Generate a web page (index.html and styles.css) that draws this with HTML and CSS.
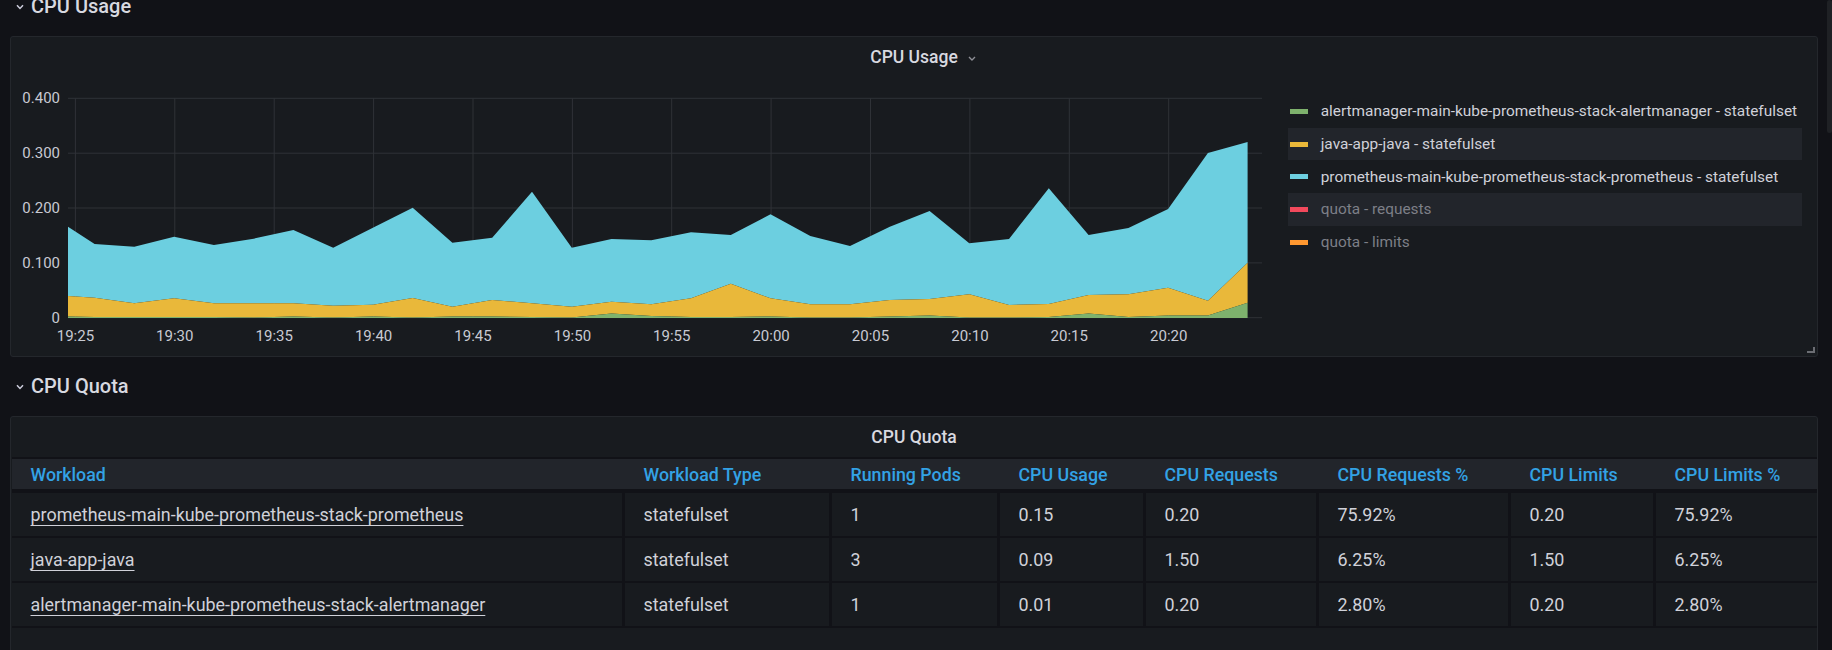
FILE: index.html
```html
<!DOCTYPE html>
<html lang="en">
<head>
<meta charset="utf-8">
<title>CPU Usage</title>
<link rel="stylesheet" href="styles.css">
</head>
<body>
<div class="dashboard">
  <div class="row-header">
    <svg class="row-chev" viewBox="0 0 8 6" width="8" height="6"><path d="M1 1.2 L4 4.4 L7 1.2" /></svg>
    <span class="row-title">CPU Usage</span>
  </div>

  <section class="panel panel-graph">
    <header class="panel-header">
      <span class="panel-title">CPU Usage</span>
      <svg class="title-chev" viewBox="0 0 8 5" width="8" height="5"><path d="M1 1 L4 4 L7 1" /></svg>
    </header>
    <div class="graph-body">
      <svg class="graph" viewBox="11 76 1267 280" width="1267" height="280">
        <g class="grid">
          <line x1="68" y1="98.3" x2="1262" y2="98.3"/>
          <line x1="68" y1="153.2" x2="1262" y2="153.2"/>
          <line x1="68" y1="208" x2="1262" y2="208"/>
          <line x1="68" y1="262.9" x2="1262" y2="262.9"/>
          <line x1="68" y1="317.7" x2="1262" y2="317.7"/>
          <line x1="75.4" y1="98.3" x2="75.4" y2="317.7"/>
          <line x1="174.8" y1="98.3" x2="174.8" y2="317.7"/>
          <line x1="274.2" y1="98.3" x2="274.2" y2="317.7"/>
          <line x1="373.6" y1="98.3" x2="373.6" y2="317.7"/>
          <line x1="473" y1="98.3" x2="473" y2="317.7"/>
          <line x1="572.4" y1="98.3" x2="572.4" y2="317.7"/>
          <line x1="671.7" y1="98.3" x2="671.7" y2="317.7"/>
          <line x1="771.1" y1="98.3" x2="771.1" y2="317.7"/>
          <line x1="870.5" y1="98.3" x2="870.5" y2="317.7"/>
          <line x1="969.9" y1="98.3" x2="969.9" y2="317.7"/>
          <line x1="1069.3" y1="98.3" x2="1069.3" y2="317.7"/>
          <line x1="1168.7" y1="98.3" x2="1168.7" y2="317.7"/>
        </g>
        <polygon class="area-prom" points="68,226.7 94.6,244 134.3,246.7 174.1,236.7 213.9,245 253.6,238.7 293.4,230 333.2,247.7 372.9,227.7 412.7,207.7 452.4,242.7 492.2,237.7 532,191.7 571.8,247.7 611.5,239 651.3,240.3 691,232.3 730.8,235 770.5,214.3 810.3,236 850,246 889.8,226.7 929.6,211 969.3,243.3 1009,239 1048.8,188.3 1088.6,235 1128.4,228 1168.1,209 1207.9,153 1247.6,142 1247.6,262.7 1207.9,300.7 1168.1,287.7 1128.4,294.3 1088.6,295 1048.8,304 1009,305 969.3,294.3 929.6,299 889.8,300 850,304.3 810.3,304.3 770.5,298.3 730.8,283.7 691,298.3 651.3,304.3 611.5,301.7 571.8,306.7 532,303.3 492.2,300 452.4,306.7 412.7,298 372.9,304.7 333.2,305.7 293.4,303.3 253.6,303.3 213.9,303.3 174.1,298.3 134.3,303.3 94.6,297.7 68,296"/>
        <polygon class="area-java" points="68,296 94.6,297.7 134.3,303.3 174.1,298.3 213.9,303.3 253.6,303.3 293.4,303.3 333.2,305.7 372.9,304.7 412.7,298 452.4,306.7 492.2,300 532,303.3 571.8,306.7 611.5,301.7 651.3,304.3 691,298.3 730.8,283.7 770.5,298.3 810.3,304.3 850,304.3 889.8,300 929.6,299 969.3,294.3 1009,305 1048.8,304 1088.6,295 1128.4,294.3 1168.1,287.7 1207.9,300.7 1247.6,262.7 1247.6,302.7 1207.9,315.5 1168.1,315.5 1128.4,317 1088.6,313.5 1048.8,317 1009,317.5 969.3,317.5 929.6,315.5 889.8,316.5 850,317.5 810.3,317.5 770.5,316.5 730.8,317 691,317 651.3,316 611.5,313.5 571.8,317.5 532,317 492.2,316.5 452.4,316.5 412.7,317.5 372.9,316.5 333.2,317.5 293.4,316.5 253.6,317.5 213.9,317 174.1,317 134.3,317 94.6,317 68,316.5"/>
        <polygon class="area-alert" points="68,316.5 94.6,317 134.3,317 174.1,317 213.9,317 253.6,317.5 293.4,316.5 333.2,317.5 372.9,316.5 412.7,317.5 452.4,316.5 492.2,316.5 532,317 571.8,317.5 611.5,313.5 651.3,316 691,317 730.8,317 770.5,316.5 810.3,317.5 850,317.5 889.8,316.5 929.6,315.5 969.3,317.5 1009,317.5 1048.8,317 1088.6,313.5 1128.4,317 1168.1,315.5 1207.9,315.5 1247.6,302.7 1247.6,318 68,318"/>
        <g class="axis y-axis">
          <text x="60" y="98.3">0.400</text>
          <text x="60" y="153.2">0.300</text>
          <text x="60" y="208">0.200</text>
          <text x="60" y="262.9">0.100</text>
          <text x="60" y="317.7">0</text>
        </g>
        <g class="axis x-axis">
          <text x="75.4" y="335.7">19:25</text>
          <text x="174.8" y="335.7">19:30</text>
          <text x="274.2" y="335.7">19:35</text>
          <text x="373.6" y="335.7">19:40</text>
          <text x="473" y="335.7">19:45</text>
          <text x="572.4" y="335.7">19:50</text>
          <text x="671.7" y="335.7">19:55</text>
          <text x="771.1" y="335.7">20:00</text>
          <text x="870.5" y="335.7">20:05</text>
          <text x="969.9" y="335.7">20:10</text>
          <text x="1069.3" y="335.7">20:15</text>
          <text x="1168.7" y="335.7">20:20</text>
        </g>
      </svg>
      <ul class="legend">
        <li class="legend-item"><span class="swatch sw-green"></span><span class="legend-label">alertmanager-main-kube-prometheus-stack-alertmanager - statefulset</span></li>
        <li class="legend-item alt"><span class="swatch sw-yellow"></span><span class="legend-label">java-app-java - statefulset</span></li>
        <li class="legend-item"><span class="swatch sw-blue"></span><span class="legend-label">prometheus-main-kube-prometheus-stack-prometheus - statefulset</span></li>
        <li class="legend-item alt hidden"><span class="swatch sw-red"></span><span class="legend-label">quota - requests</span></li>
        <li class="legend-item hidden"><span class="swatch sw-orange"></span><span class="legend-label">quota - limits</span></li>
      </ul>
    </div>
    <span class="resize-handle"></span>
  </section>

  <div class="row-header">
    <svg class="row-chev" viewBox="0 0 8 6" width="8" height="6"><path d="M1 1.2 L4 4.4 L7 1.2" /></svg>
    <span class="row-title">CPU Quota</span>
  </div>

  <section class="panel panel-table">
    <header class="panel-header">
      <span class="panel-title">CPU Quota</span>
    </header>
    <div class="table">
      <div class="tr thead">
        <div class="th">Workload</div>
        <div class="th">Workload Type</div>
        <div class="th">Running Pods</div>
        <div class="th">CPU Usage</div>
        <div class="th">CPU Requests</div>
        <div class="th">CPU Requests %</div>
        <div class="th">CPU Limits</div>
        <div class="th">CPU Limits %</div>
      </div>
      <div class="tr tbody-row">
        <div class="td"><a class="link">prometheus-main-kube-prometheus-stack-prometheus</a></div>
        <div class="td">statefulset</div>
        <div class="td">1</div>
        <div class="td">0.15</div>
        <div class="td">0.20</div>
        <div class="td">75.92%</div>
        <div class="td">0.20</div>
        <div class="td">75.92%</div>
      </div>
      <div class="tr tbody-row">
        <div class="td"><a class="link">java-app-java</a></div>
        <div class="td">statefulset</div>
        <div class="td">3</div>
        <div class="td">0.09</div>
        <div class="td">1.50</div>
        <div class="td">6.25%</div>
        <div class="td">1.50</div>
        <div class="td">6.25%</div>
      </div>
      <div class="tr tbody-row">
        <div class="td"><a class="link">alertmanager-main-kube-prometheus-stack-alertmanager</a></div>
        <div class="td">statefulset</div>
        <div class="td">1</div>
        <div class="td">0.01</div>
        <div class="td">0.20</div>
        <div class="td">2.80%</div>
        <div class="td">0.20</div>
        <div class="td">2.80%</div>
      </div>
    </div>
  </section>
</div>
<div class="scroll-thumb"></div>
</body>
</html>
```
FILE: styles.css
```css
html, body {
  margin: 0;
  padding: 0;
  background: #111217;
  height: 650px;
  overflow: hidden;
}

body {
  font-family: Roboto, "Noto Sans", "Liberation Sans", sans-serif;
  color: #ccccdc;
}

.dashboard {
  margin-top: -6px;
  padding: 0 14px 0 10px;
}

.row-header {
  display: flex;
  align-items: center;
  height: 24px;
  margin-bottom: 18px;
  padding-left: 6px;
}

.row-chev {
  width: 8px;
  height: 6px;
  margin-right: 7px;
  margin-top: 2px;
  fill: none;
  stroke: #ccccdc;
  stroke-width: 1.5;
}

.row-title {
  font-size: 20px;
  font-weight: 500;
  line-height: 24px;
  color: #d8d9e0;
}

.panel {
  position: relative;
  box-sizing: border-box;
  background: #181b1f;
  border: 1px solid #24272c;
  border-radius: 3px;
}

.panel-graph {
  height: 321px;
  margin-bottom: 17px;
}

.panel-table {
  height: 270px;
}

.panel-header {
  height: 39px;
  display: flex;
  align-items: center;
  justify-content: center;
}

.panel-table .panel-header {
  height: 40px;
}

.panel-title {
  font-size: 17.5px;
  font-weight: 500;
  color: #d8d9e0;
  line-height: 20px;
}

.title-chev {
  width: 8px;
  height: 5px;
  margin-left: 10px;
  margin-right: -18px;
  margin-top: 3px;
  fill: none;
  stroke: #8e8f96;
  stroke-width: 1.4;
}

.graph-body {
  display: flex;
  height: 280px;
}

.graph {
  display: block;
  flex: none;
}

.grid line {
  stroke: #2f3237;
  stroke-width: 1;
}

.area-prom { fill: #6ccfe0; }
.area-java { fill: #e9b83a; }
.area-alert { fill: #7eb26d; }

.axis text {
  font-family: Roboto, "Noto Sans", sans-serif;
  font-size: 15px;
  fill: #c8cad3;
  dominant-baseline: central;
}

.y-axis text { text-anchor: end; }
.x-axis text { text-anchor: middle; }

.legend {
  list-style: none;
  margin: 0 0 0 10px;
  padding: 19px 0 0 0;
  width: 514px;
}

.legend-item {
  display: flex;
  align-items: center;
  height: 32.7px;
  padding-left: 2px;
  font-size: 15.4px;
  color: #d0d1d9;
}

.legend-item.alt {
  background: #22252b;
}

.legend-item.hidden {
  color: #7d7f87;
}

.swatch {
  width: 18px;
  height: 5px;
  margin-right: 12.7px;
  flex: none;
}

.sw-green { background: #7eb26d; }
.sw-yellow { background: #eab839; }
.sw-blue { background: #6ed0e0; }
.sw-red { background: #f2495c; }
.sw-orange { background: #ff9830; }

.resize-handle {
  position: absolute;
  right: 2px;
  bottom: 3px;
  width: 6px;
  height: 4px;
  border-right: 2px solid #6b6d73;
  border-bottom: 2px solid #6b6d73;
}

.table {
  margin-left: 1px;
  border-top: 2px solid #111217;
}

.tr {
  display: grid;
  grid-template-columns: 613px 207px 168px 146px 173px 192px 145px 1fr;
}

.thead {
  height: 30px;
  background: #22252b;
  border-bottom: 4px solid #111217;
}

.th {
  display: flex;
  align-items: center;
  padding-left: 18.5px;
  font-size: 17.8px;
  font-weight: 500;
  color: #33a2e5;
  white-space: nowrap;
}

.tbody-row {
  height: 43px;
  border-bottom: 2px solid #111217;
}

.td {
  display: flex;
  align-items: center;
  box-sizing: border-box;
  padding-left: 18.5px;
  font-size: 17.9px;
  color: #d0d1d9;
  border-right: 3px solid #111217;
  white-space: nowrap;
}

.td:last-child {
  border-right: none;
}

.link {
  color: #d0d1d9;
  text-decoration: underline;
  text-decoration-thickness: 1px;
  text-underline-offset: 4px;
}

.scroll-thumb {
  position: fixed;
  top: 0;
  right: 0;
  width: 5px;
  height: 133px;
  border-radius: 3px;
  background: #1f2125;
}
```
